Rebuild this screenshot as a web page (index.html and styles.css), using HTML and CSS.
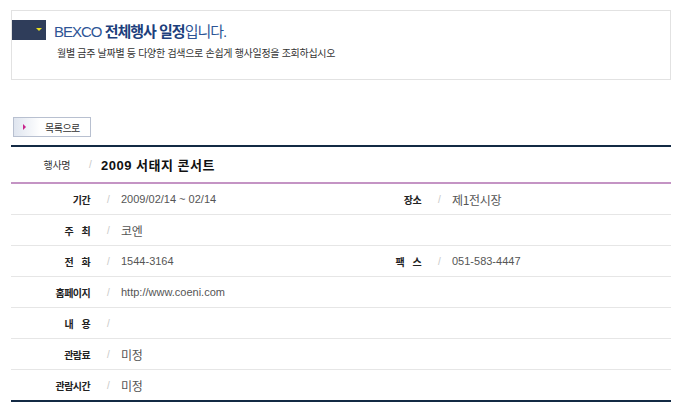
FILE: index.html
```html
<!DOCTYPE html>
<html lang="ko">

<head>
    <meta charset="UTF-8">
    <title>BEXCO 전체행사 일정</title>
    <link rel="stylesheet" href="styles.css">
</head>

<body>
    <div class="page">
        <div class="intro">
            <div class="intro-head">
                <div class="intro-mark"><span class="chevron"></span></div>
                <h1>BEXCO <strong>전체행사 일정</strong>입니다.</h1>
            </div>
            <p class="intro-desc">월별 금주 날짜별 등 다양한 검색으로 손쉽게 행사일정을 조회하십시오</p>
        </div>

        <button class="list-button"><span class="arrow"></span>목록으로</button>

        <div class="event">
            <div class="event-title">
                <span class="title-label">행사명</span>
                <span class="slash">/</span>
                <span class="title-value">2009 서태지 콘서트</span>
            </div>

            <div class="info-row">
                <span class="label">기간</span><span class="slash">/</span>
                <span class="value num">2009/02/14 ~ 02/14</span>
                <span class="label label-2">장소</span><span class="slash">/</span>
                <span class="value ko">제1전시장</span>
            </div>
            <div class="info-row">
                <span class="label">주 최</span><span class="slash">/</span>
                <span class="value ko">코엔</span>
            </div>
            <div class="info-row">
                <span class="label">전 화</span><span class="slash">/</span>
                <span class="value num">1544-3164</span>
                <span class="label label-2">팩 스</span><span class="slash">/</span>
                <span class="value num">051-583-4447</span>
            </div>
            <div class="info-row">
                <span class="label">홈페이지</span><span class="slash">/</span>
                <span class="value num">http://www.coeni.com</span>
            </div>
            <div class="info-row">
                <span class="label">내 용</span><span class="slash">/</span>
                <span class="value"></span>
            </div>
            <div class="info-row">
                <span class="label">관람료</span><span class="slash">/</span>
                <span class="value ko">미정</span>
            </div>
            <div class="info-row last">
                <span class="label">관람시간</span><span class="slash">/</span>
                <span class="value ko">미정</span>
            </div>
        </div>
    </div>
</body>

</html>
```

FILE: styles.css
```css
body {
    margin: 0;
    background-color: #fff;
    font-family: "Liberation Sans", "Noto Sans CJK KR", sans-serif;
    color: #333
}

.page {
    width: 660px;
    padding: 10px 0 0 11px
}

/* intro box */
.intro {
    height: 68px;
    border: 1px solid #e2e2e2;
    box-sizing: content-box
}

.intro-head {
    display: flex;
    align-items: center;
    margin-top: 9px;
    height: 20px
}

.intro-mark {
    width: 34px;
    height: 20px;
    background-color: #2f3d5a;
    position: relative
}

.chevron {
    position: absolute;
    left: 24px;
    top: 8px;
    width: 0;
    height: 0;
    border-left: 3px solid transparent;
    border-right: 3px solid transparent;
    border-top: 3px solid #e8e020
}

h1 {
    margin: 0 0 0 8px;
    font-size: 15px;
    font-weight: normal;
    color: #2d5496;
    letter-spacing: -1px
}

h1 strong {
    color: #1d3f7c
}

.intro-desc {
    margin: 5px 0 0 45px;
    font-family: "Noto Sans CJK KR", sans-serif;
    font-size: 10px;
    letter-spacing: -0.3px;
    color: #333
}

/* list button */
.list-button {
    display: flex;
    align-items: center;
    margin: 37px 0 0 2px;
    width: 78px;
    height: 20px;
    padding: 0;
    border: 1px solid #b8c0d0;
    background: linear-gradient(to right, #dfe5ef, #fff 35%);
    font-family: "Noto Sans CJK KR", sans-serif;
    font-size: 10px;
    letter-spacing: -0.5px;
    color: #333;
    cursor: pointer
}

.arrow {
    width: 0;
    height: 0;
    margin: 0 19px 0 9px;
    border-top: 3px solid transparent;
    border-bottom: 3px solid transparent;
    border-left: 3px solid #c8248c
}

/* event table */
.event {
    margin-top: 8px;
    border-top: 2px solid #132a44;
    border-bottom: 2px solid #132a44
}

.event-title {
    display: flex;
    align-items: center;
    height: 34px;
    padding-bottom: 1px;
    border-bottom: 2px solid #c494c4
}

.title-label {
    width: 59px;
    font-family: "Noto Sans CJK KR", sans-serif;
    font-size: 10px;
    letter-spacing: -0.4px;
    text-align: right;
    color: #333
}

.event-title .slash {
    width: 31px;
    padding-left: 19px;
    box-sizing: border-box
}

.title-value {
    font-family: "Liberation Sans", "Noto Sans CJK KR", sans-serif;
    font-size: 13px;
    font-weight: bold;
    letter-spacing: 0.5px;
    color: #111
}

.info-row {
    display: flex;
    align-items: center;
    height: 30px;
    border-bottom: 1px solid #e6e6e6
}

.info-row.last {
    border-bottom: none
}

.label {
    width: 79px;
    flex-shrink: 0;
    text-align: right;
    font-family: "Noto Sans CJK KR", sans-serif;
    font-size: 10px;
    font-weight: bold;
    letter-spacing: -0.6px;
    word-spacing: 6px;
    color: #222
}

.label-2 {
    width: 50px
}

.slash {
    width: 31px;
    flex-shrink: 0;
    padding-left: 17px;
    box-sizing: border-box;
    font-size: 10px;
    color: #c8c8c8
}

.value {
    width: 250px;
    flex-shrink: 0;
    color: #555
}

.value.num {
    font-size: 11px
}

.value.ko {
    font-family: "Noto Sans CJK KR", sans-serif;
    font-size: 12px;
    letter-spacing: -0.3px
}
```
